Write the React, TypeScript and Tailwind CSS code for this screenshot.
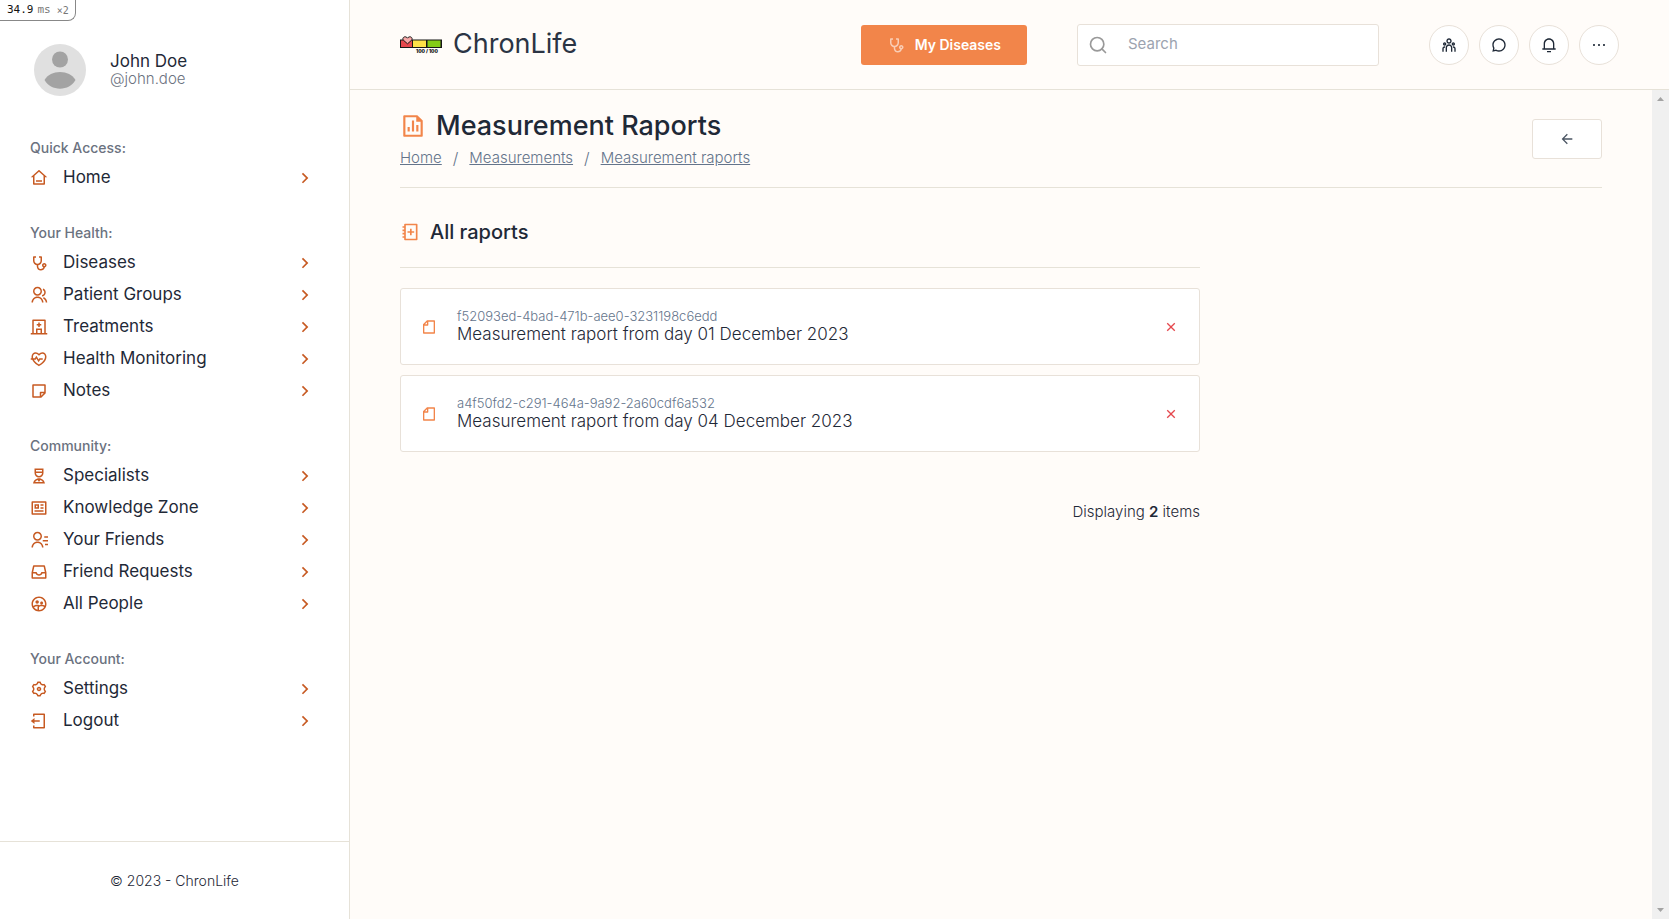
import type { IconType } from 'react-icons';
import {
  RiArrowLeftLine,
  RiArrowRightSLine,
  RiChat3Line,
  RiCloseLine,
  RiContactsLine,
  RiFileChartLine,
  RiFileLine,
  RiGroup2Line,
  RiGroupLine,
  RiHealthBookLine,
  RiHeartPulseLine,
  RiHome3Line,
  RiHospitalLine,
  RiInbox2Line,
  RiLogoutBoxLine,
  RiMoreLine,
  RiNotification3Line,
  RiNurseLine,
  RiProfileLine,
  RiSettings3Line,
  RiStethoscopeLine,
  RiStickyNoteLine,
  RiTeamLine,
} from 'react-icons/ri';
import { Search } from 'lucide-react';

type NavItem = { label: string; icon: IconType };
type NavGroup = { title: string; items: NavItem[] };

const navGroups: NavGroup[] = [
  { title: 'Quick Access:', items: [{ label: 'Home', icon: RiHome3Line }] },
  {
    title: 'Your Health:',
    items: [
      { label: 'Diseases', icon: RiStethoscopeLine },
      { label: 'Patient Groups', icon: RiGroupLine },
      { label: 'Treatments', icon: RiHospitalLine },
      { label: 'Health Monitoring', icon: RiHeartPulseLine },
      { label: 'Notes', icon: RiStickyNoteLine },
    ],
  },
  {
    title: 'Community:',
    items: [
      { label: 'Specialists', icon: RiNurseLine },
      { label: 'Knowledge Zone', icon: RiProfileLine },
      { label: 'Your Friends', icon: RiContactsLine },
      { label: 'Friend Requests', icon: RiInbox2Line },
      { label: 'All People', icon: RiGroup2Line },
    ],
  },
  {
    title: 'Your Account:',
    items: [
      { label: 'Settings', icon: RiSettings3Line },
      { label: 'Logout', icon: RiLogoutBoxLine },
    ],
  },
];

const headerActions: NavItem[] = [
  { label: 'Groups', icon: RiTeamLine },
  { label: 'Messages', icon: RiChat3Line },
  { label: 'Notifications', icon: RiNotification3Line },
  { label: 'More', icon: RiMoreLine },
];

const breadcrumbs = ['Home', 'Measurements', 'Measurement raports'];

const reports = [
  { id: 'f52093ed-4bad-471b-aee0-3231198c6edd', title: 'Measurement raport from day 01 December 2023' },
  { id: 'a4f50fd2-c291-464a-9a92-2a60cdf6a532', title: 'Measurement raport from day 04 December 2023' },
];

function Avatar() {
  return (
    <svg viewBox="0 0 52 52" className="size-[52px] shrink-0" aria-hidden="true">
      <circle cx="26" cy="26" r="26" fill="#e0e0e0" />
      <circle cx="26" cy="15.5" r="8" fill="#a3a3a3" />
      <path d="M10.5 36c3-5.200 9-8 15.500-8s12.500 2.800 15.500 8c-3.200 5.500-9 8.700-15.500 8.700S13.700 41.500 10.500 36z" fill="#a3a3a3" />
    </svg>
  );
}

function LogoMark() {
  return (
    <svg viewBox="0 0 42 18" className="h-[18px] w-[42px]" aria-hidden="true">
      <rect x="0" y="3.500" width="42" height="8.500" fill="#171717" />
      <rect x="1" y="4.500" width="11" height="6.500" fill="#e5484d" />
      <rect x="13" y="4.500" width="13" height="6.500" fill="#fde047" />
      <rect x="27.500" y="4.500" width="13" height="6.500" fill="#84cc16" />
      <path d="M7.500 7.800 3.400 4.200C2 2.500 3.600.6 5.400.8c1 .1 1.700.7 2.100 1.400C7.900 1.500 8.600.9 9.600.8c1.800-.2 3.400 1.700 2 3.400z" fill="#f9a8a8" stroke="#171717" strokeWidth="1" />
      <text x="16" y="17" fontSize="4.800" fontWeight="900" fill="#171717">100 / 100</text>
    </svg>
  );
}

function TimingBadge() {
  return (
    <div className="absolute top-0 left-0 flex h-[21px] w-[76px] items-center rounded-br-lg border-r border-b border-[#888888] bg-white pl-[7px] font-['DejaVu_Sans_Mono',monospace] text-[11px] text-[#111111]">
      34.9
      <span className="ml-1 text-[#777777]">ms</span>
      <span className="ml-[6px] text-[10px] text-[#777777]">×2</span>
    </div>
  );
}

function Sidebar() {
  return (
    <aside className="flex w-[350px] shrink-0 flex-col border-r border-[#e6e2d8] bg-white">
      <div className="flex items-center gap-6 pt-11 pl-[34px]">
        <Avatar />
        <div>
          <p className="text-[17px] leading-[18px]">John Doe</p>
          <p className="text-[15px] leading-[18px] font-light text-[#6b7280]">@john.doe</p>
        </div>
      </div>
      <nav className="flex flex-1 flex-col gap-[29px] pt-[42px] pr-[34px] pl-[30px]">
        {navGroups.map((group) => (
          <section key={group.title}>
            <h2 className="mb-1 text-sm leading-5 font-medium text-[#6b7280]">{group.title}</h2>
            <ul>
              {group.items.map(({ label, icon: Icon }) => (
                <li key={label}>
                  <a href="#" className="flex h-8 items-center gap-[15px] text-[17px]">
                    <Icon size={18} className="text-[#c75a22]" />
                    <span className="flex-1">{label}</span>
                    <RiArrowRightSLine size={20} className="text-[#c75a22]" />
                  </a>
                </li>
              ))}
            </ul>
          </section>
        ))}
      </nav>
      <footer className="flex h-[78px] items-center justify-center border-t border-[#e6e2d8] text-sm font-light">
        © 2023 - ChronLife
      </footer>
    </aside>
  );
}

function Header() {
  return (
    <header className="flex h-[90px] shrink-0 items-center gap-[50px] border-b border-[#e6e2d8] px-[50px]">
      <a href="#" className="mr-auto flex items-center gap-[11px] text-[27px] text-[#2b3444]">
        <LogoMark />
        ChronLife
      </a>
      <button type="button" className="flex h-10 items-center gap-[10px] rounded-[3px] bg-[#f2854a] px-[26px] text-sm font-semibold text-white">
        <RiStethoscopeLine size={18} className="opacity-60" />
        My Diseases
      </button>
      <div className="flex h-[42px] w-[302px] items-center gap-5 rounded-[3px] border border-[#e8e1d9] bg-white px-[10px]">
        <Search size={20} strokeWidth={2} className="shrink-0 text-[#999999]" />
        <input type="text" aria-label="Search" placeholder="Search" className="min-w-0 flex-1 bg-transparent text-[15px] outline-none placeholder:text-[#9ca3af]" />
      </div>
      <div className="flex gap-[10px]">
        {headerActions.map(({ label, icon: Icon }) => (
          <button key={label} type="button" aria-label={label} className="flex size-10 items-center justify-center rounded-full border border-[#e8e1d9] bg-white">
            <Icon size={16} />
          </button>
        ))}
      </div>
    </header>
  );
}

function ScrollTrack() {
  return (
    <div className="flex w-[17px] shrink-0 flex-col items-center justify-between bg-[#f0f0f0] py-[7px]" aria-hidden="true">
      <svg viewBox="0 0 7 4" className="h-1 w-[7px]">
        <path d="M0 4 3.500 0 7 4z" fill="#a3a3a3" />
      </svg>
      <svg viewBox="0 0 7 4" className="h-1 w-[7px]">
        <path d="M0 0 3.500 4 7 0z" fill="#a3a3a3" />
      </svg>
    </div>
  );
}

export default function App() {
  return (
    <div className="relative flex h-screen bg-[#fffcf9] font-['Inter',sans-serif] text-[#1f2937]">
      <Sidebar />
      <div className="flex min-w-0 flex-1 flex-col">
        <Header />
        <div className="flex min-h-0 flex-1">
          <main className="min-w-0 flex-1 overflow-y-auto px-[50px]">
            <div className="flex items-center justify-between border-b border-[#e6e2d8] pt-5 pb-[19px]">
              <div>
                <h1 className="flex items-center gap-[10px] text-[27px] leading-8 font-medium">
                  <RiFileChartLine size={26} className="text-[#f2854a]" />
                  Measurement Raports
                </h1>
                <ol className="mt-[6px] flex items-center gap-[11px] text-[15px] leading-5 font-light text-[#64748b]">
                  {breadcrumbs.map((crumb, index) => (
                    <li key={crumb} className="flex items-center gap-[11px]">
                      {index > 0 && <span className="text-base leading-5">/</span>}
                      <a href="#" className="underline">{crumb}</a>
                    </li>
                  ))}
                </ol>
              </div>
              <button type="button" aria-label="Back" className="flex h-10 w-[70px] items-center justify-center rounded-[3px] border border-[#e8e1d9] bg-white text-[#4b5563]">
                <RiArrowLeftLine size={16} />
              </button>
            </div>

            <section className="max-w-[800px]">
              <h2 className="flex items-center gap-[10px] border-b border-[#e6e2d8] pt-[30px] pb-[21px] text-xl leading-7 font-medium">
                <RiHealthBookLine size={20} className="text-[#f2854a]" />
                All raports
              </h2>
              <ul className="mt-5 flex flex-col gap-[10px]">
                {reports.map((report) => (
                  <li key={report.id} className="flex h-[77px] items-center gap-5 rounded-[3px] border border-[#e8e1d9] bg-white px-5">
                    <RiFileLine size={16} className="text-[#f2854a]" />
                    <a href="#" className="flex-1 pb-1 font-light">
                      <span className="block text-[13px] leading-[18px] text-[#64748b]">{report.id}</span>
                      <span className="block text-[17px] leading-[18px]">{report.title}</span>
                    </a>
                    <button type="button" aria-label="Delete raport" className="text-[#e5484d]">
                      <RiCloseLine size={16} />
                    </button>
                  </li>
                ))}
              </ul>
              <p className="mt-12 text-right text-[15px] leading-6 font-light">
                Displaying <b className="font-semibold">2</b> items
              </p>
            </section>
          </main>
          <ScrollTrack />
        </div>
      </div>
      <TimingBadge />
    </div>
  );
}
